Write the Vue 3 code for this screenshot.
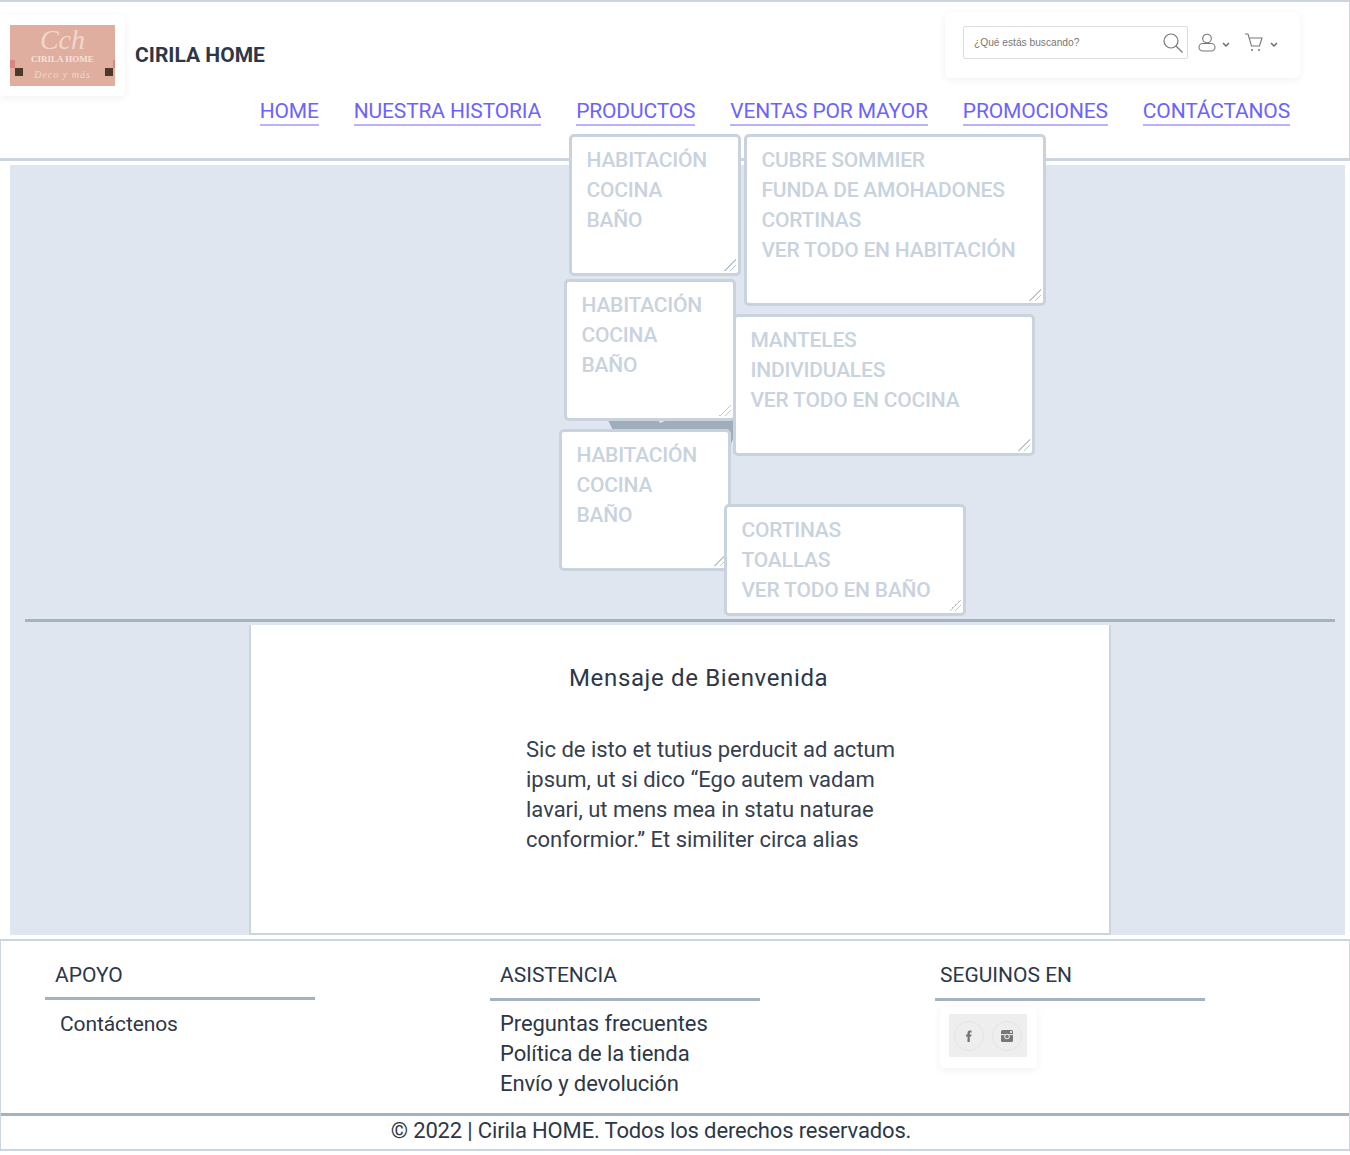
<template>
  <div class="page">
    <header class="site-header">
      <div class="top-row">
        <div class="brand">
          <div class="logo-card">
            <div class="logo">
              <span class="logo-script">Cch</span>
              <span class="logo-name">CIRILA HOME</span>
              <span class="logo-sub">Deco y más</span>
              <i class="logo-mark left"></i>
              <i class="logo-mark right"></i>
              <i class="logo-dot left"></i>
              <i class="logo-dot right"></i>
            </div>
          </div>
          <span class="brand-name">CIRILA HOME</span>
        </div>
        <div class="tools">
          <div class="search">
            <span class="search-text">¿Qué estás buscando?</span>
            <svg width="22" height="22" viewBox="0 0 22 22" fill="none" stroke="#777" stroke-width="1.2">
              <circle cx="9" cy="9" r="7" />
              <path d="M14 14l6.5 6.5" />
            </svg>
          </div>
          <svg class="tool-icon" width="18" height="20" viewBox="0 0 18 20" fill="none" stroke="#777" stroke-width="1.1">
            <circle cx="9" cy="5.500" r="4.300" />
            <rect x="1" y="10.500" width="16" height="7.500" rx="3.700" />
          </svg>
          <svg class="chev" width="8" height="6" viewBox="0 0 8 6" fill="none" stroke="#666" stroke-width="1.4">
            <path d="M1 1l3 3 3-3" />
          </svg>
          <svg class="tool-icon cart" width="20" height="20" viewBox="0 0 20 20" fill="none" stroke="#777" stroke-width="1.1">
            <path d="M1 1h3l3.500 12h8L18 5H5" />
            <circle cx="8" cy="17" r="1" fill="#777" stroke="none" />
            <circle cx="15" cy="17" r="1" fill="#777" stroke="none" />
          </svg>
          <svg class="chev" width="8" height="6" viewBox="0 0 8 6" fill="none" stroke="#666" stroke-width="1.4">
            <path d="M1 1l3 3 3-3" />
          </svg>
        </div>
      </div>
      <nav class="main-nav">
        <a v-for="link in navLinks" :key="link" href="#" class="nav-link">{{ link }}</a>
      </nav>
    </header>

    <main class="hero">
      <hr class="hero-rule" />
      <section class="welcome">
        <h2>Mensaje de Bienvenida</h2>
        <p>
          Sic de isto et tutius perducit ad actum<br />
          ipsum, ut si dico “Ego autem vadam<br />
          lavari, ut mens mea in statu naturae<br />
          conformior.” Et similiter circa alias
        </p>
      </section>
    </main>

    <footer class="site-footer">
      <div class="columns">
        <div class="col col-support">
          <h3>APOYO</h3>
          <ul>
            <li>Contáctenos</li>
          </ul>
        </div>
        <div class="col col-help">
          <h3>ASISTENCIA</h3>
          <ul>
            <li>Preguntas frecuentes</li>
            <li>Política de la tienda</li>
            <li>Envío y devolución</li>
          </ul>
        </div>
        <div class="col col-social">
          <h3>SEGUINOS EN</h3>
          <div class="social-card">
            <div class="social">
              <span class="social-icon">
                <svg width="8" height="12" viewBox="0 0 8 12" fill="#777">
                  <path d="M2.500 12V6.500H1V4.500h1.500V3C2.500 1.300 3.400.5 5 .5h1.500v2H5.600c-.6 0-.8.3-.8.8v1.200h1.700l-.3 2H4.800V12z" />
                </svg>
              </span>
              <span class="social-icon">
                <svg width="14" height="14" viewBox="0 0 14 14">
                  <rect x="1" y="1" width="12" height="12" rx="1.500" fill="#777" />
                  <rect x="1" y="5" width="12" height="1.200" fill="#ddd" />
                  <circle cx="7" cy="7.500" r="2.800" fill="#ddd" />
                  <circle cx="7" cy="7.500" r="1.700" fill="#777" />
                  <rect x="10" y="2" width="2" height="2" fill="#ddd" />
                </svg>
              </span>
            </div>
          </div>
        </div>
      </div>
      <div class="copyright">© 2022 | Cirila HOME. Todos los derechos reservados.</div>
    </footer>

    <!-- dropdown panels lying over the page -->
    <div class="menu-blob"></div>
    <div
      v-for="(panel, i) in panels"
      :key="i"
      class="panel"
      :style="{ left: panel.x + 'px', top: panel.y + 'px', width: panel.w + 'px', height: panel.h + 'px' }"
    >
      <div v-for="line in panel.lines" :key="line">{{ line }}</div>
    </div>
  </div>
</template>

<script setup>
const navLinks = ['HOME', 'NUESTRA HISTORIA', 'PRODUCTOS', 'VENTAS POR MAYOR', 'PROMOCIONES', 'CONTÁCTANOS']

const rooms = ['HABITACIÓN', 'COCINA', 'BAÑO']

const panels = [
  { x: 569, y: 134, w: 172, h: 142, lines: rooms },
  { x: 744, y: 134, w: 302, h: 172, lines: ['CUBRE SOMMIER', 'FUNDA DE AMOHADONES', 'CORTINAS', 'VER TODO EN HABITACIÓN'] },
  { x: 564, y: 279, w: 172, h: 142, lines: rooms },
  { x: 733, y: 314, w: 302, h: 142, lines: ['MANTELES', 'INDIVIDUALES', 'VER TODO EN COCINA'] },
  { x: 559, y: 429, w: 172, h: 142, lines: rooms },
  { x: 724, y: 504, w: 242, h: 112, lines: ['CORTINAS', 'TOALLAS', 'VER TODO EN BAÑO'] }
]
</script>

<style>
html,
body {
  background: #fff;
}
</style>

<style scoped>
.page {
  position: relative;
  width: 1350px;
  height: 1155px;
  overflow: hidden;
  background: #fff;
  color: #2d3748;
  font-family: Roboto, "Liberation Sans", sans-serif;
  font-size: 22px;
}

.site-header {
  box-sizing: border-box;
  height: 161px;
  border-top: 2px solid #cbd5e0;
  border-right: 1px solid #cbd5e0;
  border-bottom: 3px solid #cbd5e0;
}

.top-row {
  display: flex;
  justify-content: space-between;
  height: 97px;
}

.brand {
  display: flex;
  align-items: center;
  gap: 10px;
  height: 94px;
}

.logo-card {
  padding: 10px;
  margin-top: 12px;
  background: #fff;
  border-radius: 4px;
  box-shadow: 0 2px 8px rgba(0, 0, 0, 0.06);
}

.logo {
  position: relative;
  display: flex;
  flex-direction: column;
  align-items: center;
  width: 105px;
  height: 61px;
  background: #dfae9f;
  color: #f3e2db;
  overflow: hidden;
}

.logo-script {
  font-family: "Liberation Serif", serif;
  font-style: italic;
  font-size: 28px;
  line-height: 29px;
  opacity: 0.8;
}

.logo-name {
  font-family: "Liberation Serif", serif;
  font-weight: 700;
  font-size: 9px;
  line-height: 10px;
}

.logo-sub {
  margin-top: 3px;
  font-family: "Liberation Serif", serif;
  font-style: italic;
  font-size: 10px;
  line-height: 16px;
  letter-spacing: 1px;
  opacity: 0.8;
}

.logo-mark {
  position: absolute;
  top: 35px;
  width: 5px;
  height: 8px;
  background: #d9877a;
}

.logo-mark.left {
  left: 0;
}

.logo-mark.right {
  right: 0;
  width: 2px;
}

.logo-dot {
  position: absolute;
  top: 43px;
  width: 8px;
  height: 8px;
  background: #4b3a2c;
}

.logo-dot.left {
  left: 5px;
}

.logo-dot.right {
  right: 2px;
}

.brand-name {
  font-size: 21px;
  font-weight: 700;
  color: #2d3748;
  margin-top: 12px;
}

.tools {
  display: flex;
  align-items: center;
  width: 355px;
  height: 66px;
  box-sizing: border-box;
  padding: 0 0 5px 18px;
  margin: 10px 49px 0 0;
  background: #fff;
  border-radius: 6px;
  box-shadow: 0 2px 8px rgba(0, 0, 0, 0.06);
}

.search {
  display: flex;
  align-items: center;
  justify-content: space-between;
  box-sizing: border-box;
  width: 225px;
  height: 33px;
  padding: 0 3px 0 10px;
  border: 1px solid #ddd;
  border-radius: 2px;
}

.search-text {
  font-family: "Liberation Sans", sans-serif;
  font-size: 10.200px;
  color: #777;
}

.tool-icon {
  margin-left: 10px;
}

.tool-icon.cart {
  margin-left: 14px;
}

.chev {
  margin-left: 6px;
  margin-top: 4px;
}

.main-nav {
  display: flex;
  justify-content: flex-end;
  gap: 35px;
  padding-right: 59px;
}

.nav-link {
  color: #6c63ff;
  text-decoration: none;
  font-size: 21px;
  letter-spacing: -0.15px;
  line-height: 25px;
  border-bottom: 2px solid #b8b2ff;
}

.hero {
  display: flex;
  flex-direction: column;
  box-sizing: border-box;
  height: 770px;
  margin: 4px 5px 0 10px;
  padding-top: 454px;
  background: #e0e6ef;
}

.hero-rule {
  width: 1310px;
  height: 3px;
  margin: 0 0 3px 15px;
  border: 0;
  background: #a5b2bf;
}

.welcome {
  flex: 1;
  box-sizing: border-box;
  width: 862px;
  margin-left: 239px;
  padding-top: 38px;
  background: #fff;
  border: 2px solid #cbd5e0;
  border-top: 0;
}

.welcome h2 {
  margin: 0 0 42px 318px;
  font-size: 24px;
  font-weight: 400;
  line-height: 30px;
  letter-spacing: 0.65px;
}

.welcome p {
  margin: 0 0 0 275px;
  line-height: 30px;
  color: #36404f;
}

.site-footer {
  box-sizing: border-box;
  height: 212px;
  margin-top: 4px;
  border: solid #cbd5e0;
  border-width: 2px 1px;
}

.columns {
  display: grid;
  grid-template-columns: 445px 445px 270px;
  height: 172px;
  padding-left: 44px;
}

.col h3 {
  width: 270px;
  height: 60px;
  box-sizing: border-box;
  margin: 0;
  padding: 19px 0 0 10px;
  font-size: 21px;
  font-weight: 400;
  line-height: 30px;
  border-bottom: 3px solid #a5b2bf;
}

.col-social h3 {
  padding-left: 5px;
}

.col ul {
  margin: 8px 0 0;
  padding: 0 0 0 10px;
  list-style: none;
  line-height: 30px;
  letter-spacing: -0.1px;
}

.col-support h3 {
  height: 59px;
}

.col-support ul {
  margin-top: 9px;
  padding-left: 15px;
  font-size: 21px;
}

.social-card {
  display: inline-block;
  padding: 7px 10px 11px 9px;
  margin: 6px 0 0 5px;
  background: #fff;
  border-radius: 4px;
  box-shadow: 0 2px 8px rgba(0, 0, 0, 0.06);
}

.social {
  display: flex;
  align-items: center;
  justify-content: space-between;
  box-sizing: border-box;
  width: 78px;
  height: 43px;
  padding: 0 5px;
  background: #eee;
}

.social-icon {
  display: flex;
  align-items: center;
  justify-content: center;
  box-sizing: border-box;
  width: 30px;
  height: 30px;
  border: 1px solid #e4e4e4;
  border-radius: 50%;
}

.copyright {
  box-sizing: border-box;
  height: 36px;
  padding-right: 48px;
  border-top: 3px solid #a5b2bf;
  text-align: center;
  line-height: 30px;
  letter-spacing: -0.15px;
}

.menu-blob {
  position: absolute;
  left: 607px;
  top: 415px;
  width: 130px;
  height: 30px;
  background: #a0aebb;
  clip-path: polygon(0 10%, 50px 10%, 53px 8px, 58px 6px, 60px 10%, 100% 10%, 100% 50%, 95% 100%, 90% 55%, 5% 55%);
}

.panel {
  position: absolute;
  box-sizing: border-box;
  padding: 8px 14.500px;
  overflow: hidden;
  background: #fff;
  border: 3px solid #c8d3de;
  border-radius: 5px;
  color: #c8d3de;
  font-size: 21px;
  font-weight: 500;
  letter-spacing: -0.2px;
  line-height: 30px;
  white-space: nowrap;
}

.panel::after {
  content: "";
  position: absolute;
  right: 2px;
  bottom: 2px;
  width: 12px;
  height: 12px;
  background: linear-gradient(135deg, transparent 50%, #bcc6d2 50%, #bcc6d2 57%, transparent 57%, transparent 72%, #bcc6d2 72%, #bcc6d2 79%, transparent 79%);
}
</style>
